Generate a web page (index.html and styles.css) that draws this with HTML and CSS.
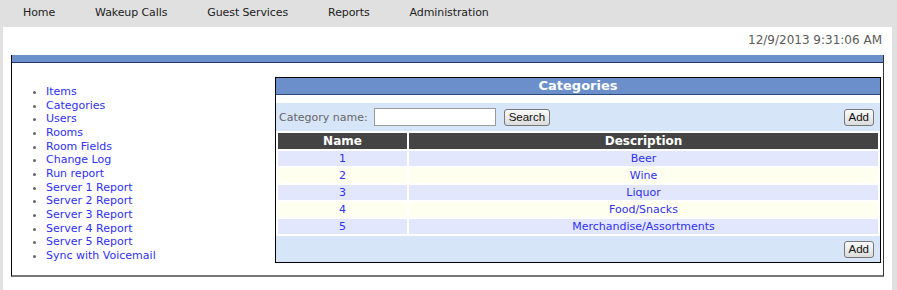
FILE: index.html
```html
<!DOCTYPE html>
<html lang="en">
<head>
  <meta charset="UTF-8">
  <title>Categories</title>
  <link rel="stylesheet" href="styles.css">
</head>
<body>

  <div class="topnav">
    <a href="#">Home</a>
    <a href="#">Wakeup Calls</a>
    <a href="#">Guest Services</a>
    <a href="#">Reports</a>
    <a href="#">Administration</a>
  </div>

  <div class="page">
    <div class="clock">12/9/2013 9:31:06 AM</div>

    <div class="frame">
      <div class="frame-bar"></div>
      <div class="frame-body">
        <ul class="side-menu">
          <li><a href="#">Items</a></li>
          <li><a href="#">Categories</a></li>
          <li><a href="#">Users</a></li>
          <li><a href="#">Rooms</a></li>
          <li><a href="#">Room Fields</a></li>
          <li><a href="#">Change Log</a></li>
          <li><a href="#">Run report</a></li>
          <li><a href="#">Server 1 Report</a></li>
          <li><a href="#">Server 2 Report</a></li>
          <li><a href="#">Server 3 Report</a></li>
          <li><a href="#">Server 4 Report</a></li>
          <li><a href="#">Server 5 Report</a></li>
          <li><a href="#">Sync with Voicemail</a></li>
        </ul>

        <div class="panel">
          <div class="panel-title">Categories</div>

          <div class="toolbar">
            <label for="catname">Category name:</label>
            <input type="text" id="catname" class="search-box">
            <button class="btn">Search</button>
            <button class="btn btn-right">Add</button>
          </div>

          <table class="grid">
            <thead>
              <tr>
                <th class="col-name">Name</th>
                <th>Description</th>
              </tr>
            </thead>
            <tbody>
              <tr class="odd"><td><a href="#">1</a></td><td><a href="#">Beer</a></td></tr>
              <tr class="even"><td><a href="#">2</a></td><td><a href="#">Wine</a></td></tr>
              <tr class="odd"><td><a href="#">3</a></td><td><a href="#">Liquor</a></td></tr>
              <tr class="even"><td><a href="#">4</a></td><td><a href="#">Food/Snacks</a></td></tr>
              <tr class="odd"><td><a href="#">5</a></td><td><a href="#">Merchandise/Assortments</a></td></tr>
            </tbody>
          </table>

          <div class="panel-footer">
            <button class="btn">Add</button>
          </div>
        </div>
      </div>
    </div>
  </div>

</body>
</html>
```

FILE: styles.css
```css
body {
  margin: 0;
  background-color: #e0e0e0;
  font-family: "DejaVu Sans", Verdana, sans-serif;
  font-size: 11px;
}

a {
  text-decoration: none;
}

/* top menu */
.topnav {
  height: 27px;
  padding-left: 3px;
  display: flex;
}

.topnav a {
  padding: 0 20px;
  line-height: 26px;
  color: #222;
  font-size: 11px;
  letter-spacing: -0.1px;
}

.page {
  background-color: #fff;
  margin: 0 5px 0 3px;
  height: calc(100vh - 27px);
  overflow: hidden;
}

.clock {
  text-align: right;
  font-size: 12px;
  line-height: 15px;
  color: #5a5a5a;
  padding: 6px 10px 7px;
}

/* main frame */
.frame {
  margin: 0 8px;
  border-left: 1px solid #000;
  border-right: 1px solid #333;
  border-bottom: 2px solid #777;
}

.frame-bar {
  height: 7px;
  background-color: #6b8fca;
  border-bottom: 1px solid #1d3766;
}

.frame-body {
  display: flex;
  padding: 14px 2px 12px 0;
}

.side-menu {
  width: 229px;
  margin: 8px 0 0;
  padding: 0 0 0 34px;
  color: #666;
  line-height: 13.67px;
}

.side-menu a {
  color: #3030f4;
}

/* categories panel */
.panel {
  flex: 1;
  border: 1px solid #000;
  background-color: #fff;
}

.panel-title {
  height: 16px;
  line-height: 16px;
  background-color: #6b8fca;
  border-bottom: 1px solid #2b4a80;
  color: #fff;
  font-weight: bold;
  font-size: 13px;
  text-align: center;
  margin-bottom: 8px;
}

.toolbar {
  height: 28px;
  background-color: #d7e5f9;
  display: flex;
  align-items: center;
  padding: 0 6px 0 3px;
  color: #666;
  font-size: 11px;
}

.search-box {
  width: 122px;
  height: 18px;
  box-sizing: border-box;
  margin: 0 8px 0 6px;
  border: 1px solid #9a9a9a;
  padding: 0 2px;
}

.btn {
  height: 17px;
  padding: 0 4px;
  font-family: "Liberation Sans", Arial, sans-serif;
  font-size: 11.5px;
  color: #111;
  background: linear-gradient(#fafafa, #dcdcdc);
  border: 1px solid #777;
  border-radius: 3px;
  line-height: 14px;
}

.btn-right {
  margin-left: auto;
}

.grid {
  width: 100%;
  border-spacing: 2px;
  font-size: 11px;
}

.grid th {
  background-color: #444;
  color: #fff;
  font-size: 12px;
  height: 16px;
  padding: 0;
  line-height: 16px;
}

.grid .col-name {
  width: 129px;
}

.grid td {
  text-align: center;
  height: 15px;
  padding: 0;
  line-height: 15px;
}

.grid td a {
  color: #3030f4;
}

.odd td {
  background-color: #e3e7fd;
}

.even td {
  background-color: #fffff0;
}

.panel-footer {
  height: 26px;
  background-color: #d7e5f9;
  display: flex;
  align-items: center;
  justify-content: flex-end;
  padding: 0 6px;
}
```
